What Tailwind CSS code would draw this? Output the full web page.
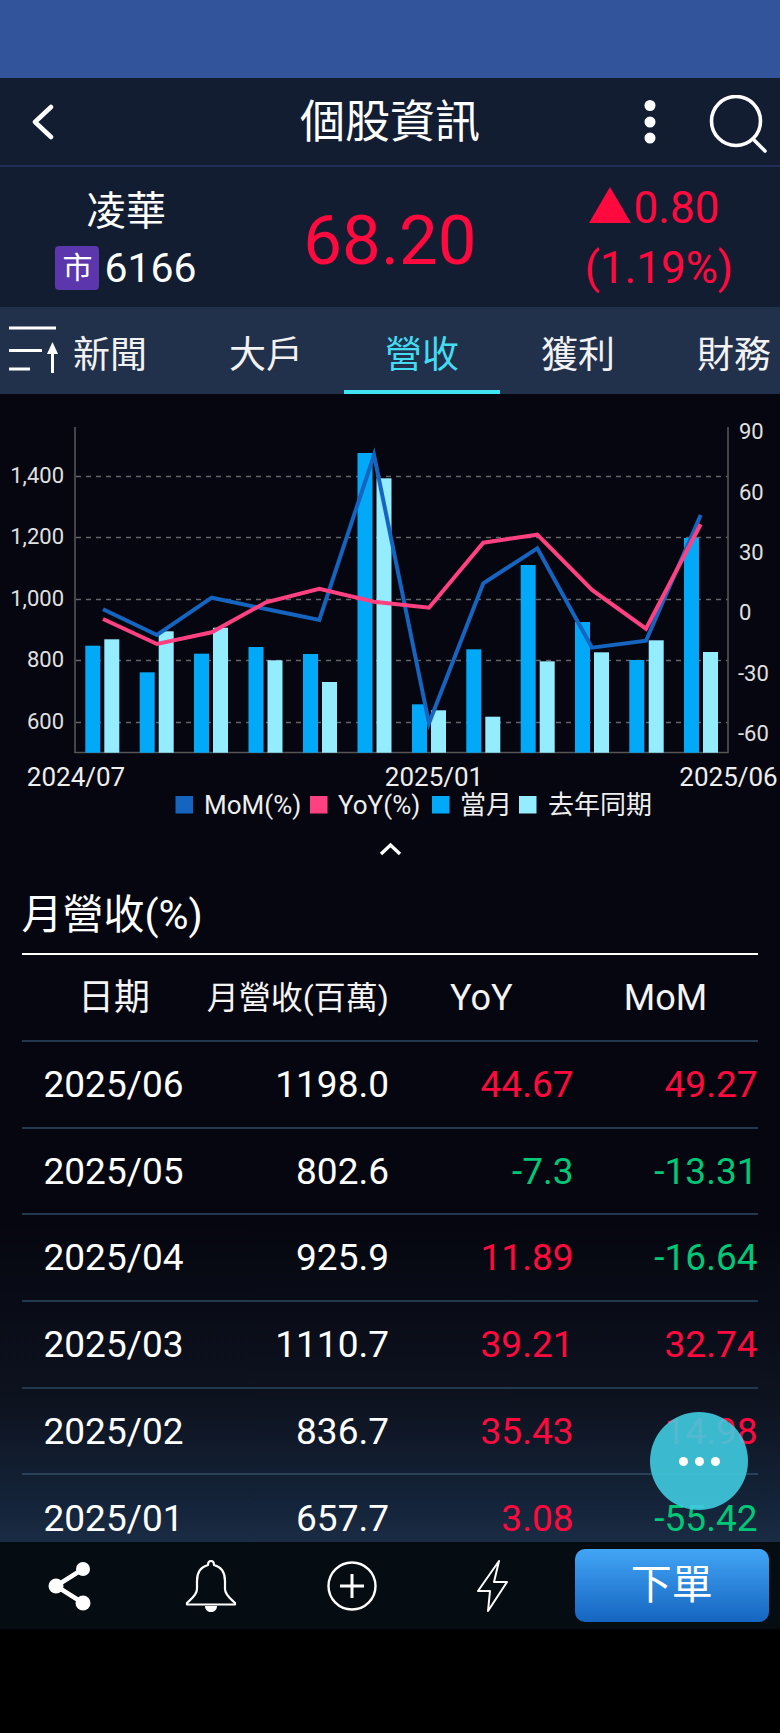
<!DOCTYPE html>
<html lang="zh-Hant">
<head>
<meta charset="utf-8">
<title>個股資訊</title>
<script src="https://cdn.jsdelivr.net/npm/@tailwindcss/browser@4"></script>
</head>
<body class="bg-black">
<div class="relative w-[780px] h-[1733px] overflow-hidden flex flex-col bg-black text-white [font-family:Roboto,'Noto_Sans_CJK_TC',sans-serif]">
  <div class="h-[78px] shrink-0 bg-[#31549a]"></div>

  <header class="h-[89px] shrink-0 bg-[#131d31] border-b-2 border-[#202f55] grid grid-cols-[1fr_auto_1fr] items-center">
    <div class="pl-[30px] flex items-center">
      <svg width="26" height="36" viewBox="0 0 26 36" fill="none" stroke="#fff" stroke-width="4.5" stroke-linecap="round" stroke-linejoin="round"><path d="M21 3 L5 18 L21 33"/></svg>
    </div>
    <div class="text-[45px] leading-none mt-[2px]">個股資訊</div>
    <div class="flex justify-end items-center pr-[13px] gap-[53px]">
      <svg width="12" height="44" viewBox="0 0 12 44" fill="#fff"><circle cx="6" cy="5.5" r="5.5"/><circle cx="6" cy="22" r="5.5"/><circle cx="6" cy="38" r="5.5"/></svg>
      <svg width="58" height="58" viewBox="0 0 58 58" fill="none" stroke="#fff" stroke-width="3.6" class="mt-[4px]"><circle cx="27" cy="26" r="24.5"/><path d="M44 44 L56 56" stroke-linecap="round"/></svg>
    </div>
  </header>

  <section class="h-[140px] shrink-0 bg-[#131d31] grid grid-cols-[252px_276px_252px] items-center">
    <div class="flex flex-col items-center">
      <div class="text-[40px] leading-[46px] mb-[11px] mt-[4px]">凌華</div>
      <div class="flex items-center gap-[5px]">
        <span class="w-[44px] h-[44px] rounded-[4px] bg-[#5b36ac] flex items-center justify-center text-[30px] leading-none">市</span>
        <span class="text-[41px] leading-[44px]">6166</span>
      </div>
    </div>
    <div class="text-center text-[69px] leading-none text-[#ff0a3e] mt-[6px]">68.20</div>
    <div class="flex flex-col items-center text-[#ff0a3e] pl-[10px]">
      <div class="flex items-center gap-[3px] pr-[10px] h-[50px] -mt-[2px]">
        <svg width="42" height="36" viewBox="0 0 42 36" fill="#ff0a3e" class="-mt-[6px]"><path d="M21 0 L42 36 L0 36 Z"/></svg>
        <span class="text-[44px] leading-none">0.80</span>
      </div>
      <div class="text-[44px] leading-none mt-[13px]">(1.19%)</div>
    </div>
  </section>

  <nav class="relative h-[87px] shrink-0 bg-[#22314b] overflow-hidden">
    <div class="grid grid-cols-[156px_156px_156px_156px_156px] ml-[32px] w-[780px] h-full text-[37px] leading-none text-[#f2f2f2]">
      <div class="flex items-center justify-center pt-[10px]">新聞</div>
      <div class="flex items-center justify-center pt-[10px]">大戶</div>
      <div class="flex items-center justify-center pt-[14px] text-[#44dcf0] border-b-[4px] border-[#3fe3f2]">營收</div>
      <div class="flex items-center justify-center pt-[10px]">獲利</div>
      <div class="flex items-center justify-center pt-[10px]">財務</div>
    </div>
    <svg class="absolute left-0 top-0" width="64" height="87" viewBox="0 0 64 87" fill="none" stroke="#fff">
      <path d="M9 21 H56" stroke-width="3"/>
      <path d="M9 43.5 H42" stroke-width="3"/>
      <path d="M9 62 H30" stroke-width="3"/>
      <path d="M52.500 43 V66" stroke-width="3"/>
      <path d="M52.500 35 L58 47 H47 Z" fill="#fff" stroke="none"/>
    </svg>
  </nav>

  <main class="relative h-[1148px] shrink-0 overflow-hidden bg-[linear-gradient(180deg,#05060f_0%,#05060f_72%,#0e1320_88%,#14243a_97%,#1a2c44_100%)]">
    <svg class="block" width="780" height="466" viewBox="0 394 780 466" font-family="Roboto, 'Noto Sans CJK TC', sans-serif">
      <g stroke="#666" stroke-width="1.3" stroke-dasharray="5 5">
        <path d="M76 476.5 H728"/><path d="M76 537.5 H728"/><path d="M76 599.5 H728"/><path d="M76 660.5 H728"/><path d="M76 722.5 H728"/>
      </g>
      <path d="M75 427 V752.5 H728 V427" fill="none" stroke="#555" stroke-width="1.6"/>
      <g fill="#03a9f9">
        <rect x="85.3" y="645.7" width="15" height="107"/>
        <rect x="139.7" y="672.3" width="15" height="80.4"/>
        <rect x="194" y="653.7" width="15" height="99"/>
        <rect x="248.5" y="647" width="15" height="105.7"/>
        <rect x="303" y="654" width="15" height="98.7"/>
        <rect x="357.5" y="453" width="15" height="299.7"/>
        <rect x="412" y="704.3" width="15" height="48.4"/>
        <rect x="466.3" y="649.3" width="15" height="103.4"/>
        <rect x="520.7" y="565" width="15" height="187.7"/>
        <rect x="575" y="622" width="15" height="130.7"/>
        <rect x="629.3" y="660" width="15" height="92.7"/>
        <rect x="684" y="538" width="15" height="214.7"/>
      </g>
      <g fill="#93ecff">
        <rect x="104.3" y="639.3" width="15" height="113.4"/>
        <rect x="158.7" y="631.3" width="15" height="121.4"/>
        <rect x="213" y="627.7" width="15" height="125"/>
        <rect x="267.5" y="660.3" width="15" height="92.4"/>
        <rect x="322" y="682" width="15" height="70.7"/>
        <rect x="376.5" y="478.3" width="15" height="274.4"/>
        <rect x="431" y="710.3" width="15" height="42.4"/>
        <rect x="485.3" y="716.7" width="15" height="36"/>
        <rect x="539.7" y="661.3" width="15" height="91.4"/>
        <rect x="594" y="652.3" width="15" height="100.4"/>
        <rect x="648.7" y="640.3" width="15" height="112.4"/>
        <rect x="703" y="652" width="15" height="100.7"/>
      </g>
      <polyline fill="none" stroke="#1565c0" stroke-width="4" points="103,609.3 157,635 211.7,597.7 266,609 319.3,620 374,455 429,723.3 483.3,583.3 537.3,548.3 592,647.7 646,640.7 700.7,515"/>
      <polyline fill="none" stroke="#ff4081" stroke-width="4" points="103,619 157,644 211.7,632.3 266,602.3 319.3,588.7 374,601.7 429,607.7 483.3,542.7 537.3,534.7 592,590 646,628.7 700.7,524.3"/>
      <g fill="#e0e0e0" font-size="22" text-anchor="end">
        <text x="64" y="482.5">1,400</text>
        <text x="64" y="544">1,200</text>
        <text x="64" y="606">1,000</text>
        <text x="64" y="667">800</text>
        <text x="64" y="729">600</text>
      </g>
      <g fill="#e0e0e0" font-size="22">
        <text x="739" y="439">90</text>
        <text x="739" y="499.5">60</text>
        <text x="739" y="560">30</text>
        <text x="739" y="620">0</text>
        <text x="738" y="680.5">-30</text>
        <text x="738" y="741">-60</text>
      </g>
      <g fill="#eeeeee" font-size="26">
        <text x="76" y="786" text-anchor="middle">2024/07</text>
        <text x="434" y="786" text-anchor="middle">2025/01</text>
        <text x="728.500" y="786" text-anchor="middle">2025/06</text>
      </g>
      <rect x="175.5" y="796" width="17.5" height="17.5" fill="#1565c0"/>
      <rect x="310" y="796" width="17.5" height="17.5" fill="#ff4081"/>
      <rect x="432" y="796" width="17.5" height="17.5" fill="#03a9f9"/>
      <rect x="519" y="796" width="17.5" height="17.5" fill="#93ecff"/>
      <g fill="#eeeeee" font-size="26">
        <text x="204" y="814">MoM(%)</text>
        <text x="338" y="814">YoY(%)</text>
        <text x="460" y="814">當月</text>
        <text x="548" y="814">去年同期</text>
      </g>
      <path d="M381 854 L390.5 845 L400 854" fill="none" stroke="#fff" stroke-width="3.4"/>
    </svg>

    <div class="ml-[21.5px] w-[736px]">
      <div class="h-[95px] border-b-2 border-white text-[41px] leading-none flex items-center pt-[17px]">月營收(%)</div>
      <div class="grid grid-cols-[185px_182.5px_184.5px_184px] items-center h-[87px] border-b-2 border-[#22384f] text-center text-[36px] leading-none text-[#f4f4f4] whitespace-nowrap">
        <div>日期</div>
        <div class="text-[32px]">月營收(百萬)</div>
        <div>YoY</div>
        <div>MoM</div>
      </div>
      <div class="grid grid-cols-[185px_182.5px_184.5px_184px] items-center h-[86.7px] border-b-2 border-[#22384f] text-right text-[37px] leading-none">
        <div class="text-left pl-[22px]">2025/06</div><div>1198.0</div><div class="text-[#ff0a3e]">44.67</div><div class="text-[#ff0a3e]">49.27</div>
      </div>
      <div class="grid grid-cols-[185px_182.5px_184.5px_184px] items-center h-[86.7px] border-b-2 border-[#22384f] text-right text-[37px] leading-none">
        <div class="text-left pl-[22px]">2025/05</div><div>802.6</div><div class="text-[#00c878]">-7.3</div><div class="text-[#00c878]">-13.31</div>
      </div>
      <div class="grid grid-cols-[185px_182.5px_184.5px_184px] items-center h-[86.7px] border-b-2 border-[#22384f] text-right text-[37px] leading-none">
        <div class="text-left pl-[22px]">2025/04</div><div>925.9</div><div class="text-[#ff0a3e]">11.89</div><div class="text-[#00c878]">-16.64</div>
      </div>
      <div class="grid grid-cols-[185px_182.5px_184.5px_184px] items-center h-[86.7px] border-b-2 border-[#22384f] text-right text-[37px] leading-none">
        <div class="text-left pl-[22px]">2025/03</div><div>1110.7</div><div class="text-[#ff0a3e]">39.21</div><div class="text-[#ff0a3e]">32.74</div>
      </div>
      <div class="grid grid-cols-[185px_182.5px_184.5px_184px] items-center h-[86.7px] border-b-2 border-[#2a4058] text-right text-[37px] leading-none">
        <div class="text-left pl-[22px]">2025/02</div><div>836.7</div><div class="text-[#ff0a3e]">35.43</div><div class="text-[#ff0a3e]">14.98</div>
      </div>
      <div class="grid grid-cols-[185px_182.5px_184.5px_184px] items-center h-[86.7px] text-right text-[37px] leading-none">
        <div class="text-left pl-[22px]">2025/01</div><div>657.7</div><div class="text-[#ff0a3e]">3.08</div><div class="text-[#00c878]">-55.42</div>
      </div>
    </div>
  </main>

  <footer class="h-[87px] shrink-0 bg-[#060d12] grid grid-cols-[140.7px_140.7px_140.7px_140.7px_1fr] items-center">
    <div class="flex justify-center">
      <svg width="44" height="50" viewBox="0 0 44 50" fill="#fff" stroke="#fff"><path d="M35 8 L8 25 L35 42" fill="none" stroke-width="4.5"/><circle cx="35" cy="8" r="7" stroke="none"/><circle cx="8" cy="25" r="7.5" stroke="none"/><circle cx="35" cy="42" r="7.5" stroke="none"/></svg>
    </div>
    <div class="flex justify-center">
      <svg width="52" height="54" viewBox="0 0 52 54" fill="none" stroke="#fff" stroke-width="2.2"><path d="M26 2 C23.5 2 23 4 23 6 C15 8 12 14 12 22 V30 C12 36 6 40 2 44 V45.5 H50 V44 C46 40 40 36 40 30 V22 C40 14 37 8 29 6 C29 4 28.500 2 26 2 Z" stroke-linejoin="round"/><path d="M20 47 H32 C32 51 29 53 26 53 C23 53 20 51 20 47 Z" fill="#fff" stroke="none"/></svg>
    </div>
    <div class="flex justify-center">
      <svg width="50" height="50" viewBox="0 0 50 50" fill="none" stroke="#fff"><circle cx="25" cy="25" r="23.500" stroke-width="2.400"/><path d="M13 25 H37 M25 13 V37" stroke-width="3"/></svg>
    </div>
    <div class="flex justify-center">
      <svg width="32" height="54" viewBox="0 0 32 54" fill="none" stroke="#fff" stroke-width="2" stroke-linejoin="round"><path d="M23 2 L2 32 H14 L12 52 L31 23 H18 Z"/></svg>
    </div>
    <div class="pl-[11.8px]">
      <button class="w-[194.500px] h-[73px] rounded-[10px] bg-[linear-gradient(180deg,#42a5f5,#1565c0)] text-[41px] leading-none text-white flex items-center justify-center">下單</button>
    </div>
  </footer>

  <div class="flex-1 bg-black"></div>

  <div class="absolute left-[650px] top-[1412px] w-[98px] h-[98px] rounded-full bg-[#40cbe0]/90 flex items-center justify-center gap-[7px]">
    <span class="w-[9px] h-[9px] rounded-full bg-white"></span>
    <span class="w-[9px] h-[9px] rounded-full bg-white"></span>
    <span class="w-[9px] h-[9px] rounded-full bg-white"></span>
  </div>
</div>
</body>
</html>
